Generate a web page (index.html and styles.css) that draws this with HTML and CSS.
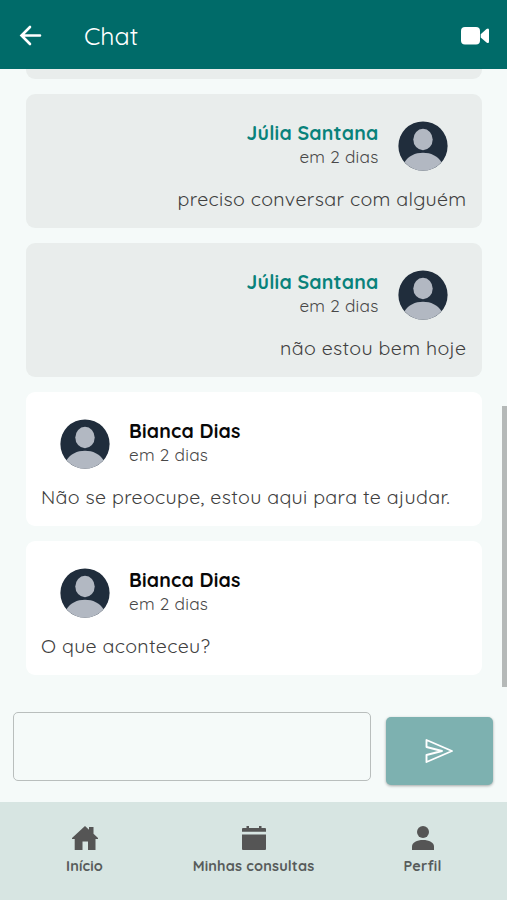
FILE: index.html
```html
<!DOCTYPE html>
<html lang="pt-BR">
<head>
<meta charset="utf-8">
<meta name="viewport" content="width=device-width, initial-scale=1">
<title>Chat</title>
<link rel="stylesheet" href="styles.css">
</head>
<body>
<svg class="defs" aria-hidden="true">
  <symbol id="avatar" viewBox="0 0 50 50">
    <circle cx="25" cy="25" r="24.6" fill="#202d3c"/>
    <path d="M6.500 41.200C10.500 35 17 31.800 25 31.800s14.500 3.200 18.500 9.400A24.600 24.600 0 0 1 6.500 41.200Z" fill="#b2b8c2"/>
    <ellipse cx="25" cy="18.500" rx="9.700" ry="10.700" fill="#b2b8c2"/>
  </symbol>
</svg>
<div class="app">
  <header class="topbar">
    <svg class="back" viewBox="0 0 24 22"><path d="M21 10.500H2.500M11 2 2.500 10.500l8.500 8.500" fill="none" stroke="#fff" stroke-width="2.600" stroke-linecap="round"/></svg>
    <h1 class="title">Chat</h1>
    <svg class="video" viewBox="0 0 28 18"><rect width="19" height="17.500" rx="4" fill="#fff"/><path d="M19.700 7.300 25.500 2Q28 .5 28 3v11.500q0 2.500-2.500 1L19.700 10.400Z" fill="#fff"/></svg>
  </header>
  <main class="messages">
    <article class="card mine"></article>
    <article class="card mine">
      <div class="author"><svg class="avatar"><use href="#avatar"/></svg><div><div class="name">Júlia Santana</div><div class="time">em 2 dias</div></div></div>
      <p class="text">preciso conversar com alguém</p>
    </article>
    <article class="card mine">
      <div class="author"><svg class="avatar"><use href="#avatar"/></svg><div><div class="name">Júlia Santana</div><div class="time">em 2 dias</div></div></div>
      <p class="text">não estou bem hoje</p>
    </article>
    <article class="card">
      <div class="author"><svg class="avatar"><use href="#avatar"/></svg><div><div class="name">Bianca Dias</div><div class="time">em 2 dias</div></div></div>
      <p class="text">Não se preocupe, estou aqui para te ajudar.</p>
    </article>
    <article class="card">
      <div class="author"><svg class="avatar"><use href="#avatar"/></svg><div><div class="name">Bianca Dias</div><div class="time">em 2 dias</div></div></div>
      <p class="text">O que aconteceu?</p>
    </article>
    <span class="thumb"></span>
  </main>
  <form class="composer">
    <input class="field" type="text" aria-label="Mensagem">
    <button class="send" type="button" aria-label="Enviar">
      <svg viewBox="0 0 30 26"><path d="M2.500 2 28 13 2.500 24V17L18 13 2.500 9Z" fill="none" stroke="#fff" stroke-width="1.900" stroke-linejoin="round"/></svg>
    </button>
  </form>
  <nav class="tabs">
    <a class="tab"><svg viewBox="0 0 26 24"><path d="M13 0l4 3.700V1h4.500v6.700L26 12v1h-2.500v11H16v-8.500h-5.500V24H2.700V13H0v-1Z"/></svg><span>Início</span></a>
    <a class="tab"><svg viewBox="0 0 26 24"><path d="M1 5.800V3q0-1 1-1h3.500V0h2.500v2h10V0h2.500v2H24q1 0 1 1v2.800ZM1 8.500h24V23q0 1-1 1H2q-1 0-1-1Z"/></svg><span>Minhas consultas</span></a>
    <a class="tab"><svg viewBox="0 0 26 24"><circle cx="13" cy="6" r="6"/><path d="M2 24v-3.500C2 16.500 7 14 13 14s11 2.500 11 6.500V24Z"/></svg><span>Perfil</span></a>
  </nav>
</div>
</body>
</html>
```
FILE: styles.css
```css
* { box-sizing: border-box; }
body { margin: 0; font-family: Quicksand, Lato, sans-serif; color: #404040; background: #f5faf9; }
.defs { display: none; }
.app { display: flex; flex-direction: column; height: 900px; overflow: hidden; }
.topbar { display: flex; align-items: center; flex: none; height: 69px; padding: 2px 18px 0 19px; background: #006b69; color: #fff; }
.back { width: 24px; height: 22px; }
.title { margin: 0 0 0 41px; font-size: 25px; font-weight: 450; }
.video { width: 28px; height: 18px; margin-left: auto; }
.messages { position: relative; display: flex; flex-direction: column; justify-content: flex-end; gap: 15px; flex: none; height: 618px; padding: 0 25.500px 12px 26px; overflow: hidden; }
.card { flex: none; height: 134px; padding: 27px 15px 0; border-radius: 9px; background: #fff; }
.mine { background: #e9edec; text-align: right; }
.author { display: flex; align-items: flex-start; gap: 19px; padding: 0 19px; height: 50px; }
.mine .author { flex-direction: row-reverse; }
.avatar { width: 50px; height: 50px; }
.name { font-size: 19.500px; line-height: 24px; font-weight: 700; letter-spacing: .2px; color: #080808; }
.mine .name { color: #09827b; }
.time { font-size: 17.200px; line-height: 24px; letter-spacing: .25px; color: #484848; }
.text { margin: 15px 0 0; font-size: 19.600px; line-height: 26px; letter-spacing: .3px; white-space: nowrap; }
.thumb { position: absolute; right: 0; top: 337px; width: 5px; height: 281px; background: #b5b9b8; }
.composer { display: flex; align-items: flex-start; gap: 15px; flex: none; height: 115px; padding: 25px 14.500px 0 13px; }
.field { flex: 1; min-width: 0; height: 68.500px; border: 1.500px solid #b9bebd; border-radius: 5px; background: transparent; outline: 0; }
.send { display: grid; place-items: center; width: 106.500px; height: 68.500px; margin-top: 4.500px; padding: 0; border: 0; border-radius: 5px; background: #7db1b0; box-shadow: 0 1px 3px #0005; }
.send svg { width: 30px; height: 26px; }
.tabs { display: flex; flex: 1; background: #d7e5e2; padding-top: 24px; }
.tab { flex: 1; display: flex; flex-direction: column; align-items: center; gap: 6px; font-size: 14.500px; line-height: 20px; font-weight: 700; letter-spacing: .15px; color: #575c5b; }
.tab svg { width: 26px; height: 24px; fill: #555; }
```
